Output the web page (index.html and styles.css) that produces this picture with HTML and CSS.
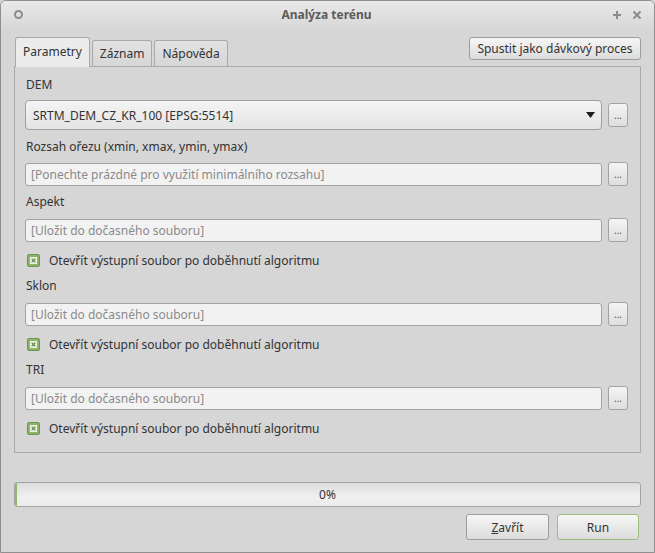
FILE: index.html
```html
<!DOCTYPE html>
<html lang="cs">
<head>
<meta charset="utf-8">
<title>Analýza terénu</title>
<link rel="stylesheet" href="styles.css">
</head>
<body>
<div class="window">
  <div class="titlebar">
    <span class="tb-icon"></span>
    <span class="title">Analýza terénu</span>
    <span class="tb-controls">
      <svg class="tb-btn" width="10" height="10" viewBox="0 0 10 10"><path d="M5 1v8M1 5h8" stroke="#8a8a8a" stroke-width="2"/></svg>
      <svg class="tb-btn" width="10" height="10" viewBox="0 0 10 10"><path d="M1.5 1.5l7 7M8.5 1.5l-7 7" stroke="#8a8a8a" stroke-width="2"/></svg>
    </span>
  </div>
  <div class="content">
    <div class="tabbar">
      <div class="tabs">
        <div class="tab active">Parametry</div>
        <div class="tab">Záznam</div>
        <div class="tab">Nápověda</div>
      </div>
      <button class="btn batch">Spustit jako dávkový proces</button>
    </div>
    <div class="panel">
      <div class="label first">DEM</div>
      <div class="row combo-row">
        <div class="combo">
          <span>SRTM_DEM_CZ_KR_100 [EPSG:5514]</span>
          <svg width="9" height="6" viewBox="0 0 9 6"><path d="M0 0h9L4.5 6z" fill="#1e1e1e"/></svg>
        </div>
        <button class="dots">...</button>
      </div>

      <div class="label after-combo">Rozsah ořezu (xmin, xmax, ymin, ymax)</div>
      <div class="row">
        <div class="input">[Ponechte prázdné pro využití minimálního rozsahu]</div>
        <button class="dots">...</button>
      </div>

      <div class="label">Aspekt</div>
      <div class="row">
        <div class="input">[Uložit do dočasného souboru]</div>
        <button class="dots">...</button>
      </div>
      <div class="check">
        <svg width="13" height="13" viewBox="0 0 13 13"><rect x="0.5" y="0.5" width="12" height="12" rx="1.5" fill="#8db56a" stroke="#6f9450"/><rect x="3" y="3" width="7" height="7" fill="#eef3e8"/><path d="M4.6 4.6l3.8 3.8M8.4 4.6l-3.8 3.8" stroke="#5f8440" stroke-width="1.3"/></svg>
        <span>Otevřít výstupní soubor po doběhnutí algoritmu</span>
      </div>

      <div class="label">Sklon</div>
      <div class="row">
        <div class="input">[Uložit do dočasného souboru]</div>
        <button class="dots">...</button>
      </div>
      <div class="check">
        <svg width="13" height="13" viewBox="0 0 13 13"><rect x="0.5" y="0.5" width="12" height="12" rx="1.5" fill="#8db56a" stroke="#6f9450"/><rect x="3" y="3" width="7" height="7" fill="#eef3e8"/><path d="M4.6 4.6l3.8 3.8M8.4 4.6l-3.8 3.8" stroke="#5f8440" stroke-width="1.3"/></svg>
        <span>Otevřít výstupní soubor po doběhnutí algoritmu</span>
      </div>

      <div class="label">TRI</div>
      <div class="row">
        <div class="input">[Uložit do dočasného souboru]</div>
        <button class="dots">...</button>
      </div>
      <div class="check">
        <svg width="13" height="13" viewBox="0 0 13 13"><rect x="0.5" y="0.5" width="12" height="12" rx="1.5" fill="#8db56a" stroke="#6f9450"/><rect x="3" y="3" width="7" height="7" fill="#eef3e8"/><path d="M4.6 4.6l3.8 3.8M8.4 4.6l-3.8 3.8" stroke="#5f8440" stroke-width="1.3"/></svg>
        <span>Otevřít výstupní soubor po doběhnutí algoritmu</span>
      </div>
    </div>

    <div class="progress">
      <div class="progress-fill" style="width:2px"></div>
      <span class="progress-text">0%</span>
    </div>

    <div class="actions">
      <button class="btn action"><u>Z</u>avřít</button>
      <button class="btn action run">Run</button>
    </div>
  </div>
</div>
</body>
</html>
```
FILE: styles.css
```css
* { box-sizing: border-box; }
html, body { margin: 0; padding: 0; }
body {
  width: 655px;
  height: 553px;
  font-family: "Noto Sans", "Open Sans", sans-serif;
  font-size: 12px;
  color: #333333;
  background: #d6d6d6;
}
.window {
  width: 655px;
  height: 553px;
  border: 1px solid #8f8f8f;
  border-radius: 6px 6px 0 0;
  background: #d6d6d6;
  display: flex;
  flex-direction: column;
  overflow: hidden;
}
.titlebar {
  height: 27px;
  flex: none;
  display: flex;
  align-items: center;
  padding: 0 12px 0 13px;
  background: linear-gradient(#e9e9e9, #d8d8d8);
}
.tb-icon {
  width: 9px;
  height: 9px;
  border: 2px solid #8a8a8a;
  border-radius: 50%;
}
.title {
  flex: 1;
  text-align: center;
  font-weight: bold;
  font-size: 12px;
  color: #5c5c5c;
  padding-left: 18px;
}
.tb-controls {
  display: flex;
  gap: 10px;
  align-items: center;
}
.tb-btn { display: block; }
.content {
  flex: 1;
  display: flex;
  flex-direction: column;
  padding: 9px 13px 0 13px;
}
.tabbar {
  display: flex;
  align-items: flex-start;
  justify-content: space-between;
  height: 29px;
  padding: 0 0 0 1px;
}
.tabs {
  display: flex;
  align-items: flex-end;
  gap: 2px;
  height: 29px;
}
.tab {
  height: 26px;
  padding: 0 7px;
  display: flex;
  align-items: center;
  border: 1px solid #a9a9a9;
  border-bottom: none;
  border-radius: 3px 3px 0 0;
  background: linear-gradient(#e2e2e2, #d6d6d6);
  color: #333;
}
.tab.active {
  height: 30px;
  margin-bottom: -1px;
  background: #ececec;
  position: relative;
  z-index: 1;
  padding: 0 7px 2px 7px;
}
.btn {
  font-family: inherit;
  font-size: 12px;
  color: #333;
  border: 1px solid #9c9c9c;
  border-radius: 3px;
  background: linear-gradient(#f6f6f6, #dcdcdc);
  padding: 0;
  margin: 0;
}
.batch {
  height: 23px;
  width: 172px;
}
.panel {
  height: 387px;
  border: 1px solid #aaaaaa;
  background: #d6d6d6;
  padding: 0 12px 0 10px;
  display: flex;
  flex-direction: column;
}
.label {
  height: 16px;
  line-height: 16px;
  margin-top: 8px;
  margin-bottom: 8px;
  padding-left: 1px;
}
.label.first { margin-top: 10px; margin-bottom: 7px; }
.label.after-combo { margin-top: 9px; margin-bottom: 7px; }
.row {
  display: flex;
  align-items: center;
  gap: 6px;
  height: 24px;
}
.combo-row { height: 30px; }
.combo {
  flex: 1;
  height: 30px;
  border: 1px solid #a0a0a0;
  border-radius: 4px;
  background: linear-gradient(#f4f4f4, #e4e4e4);
  display: flex;
  align-items: center;
  justify-content: space-between;
  padding: 0 6px 0 7px;
}
.input {
  flex: 1;
  height: 23px;
  border: 1px solid #a3a3a3;
  border-radius: 3px;
  background: #f2f2f2;
  color: #8a8a8a;
  display: flex;
  align-items: center;
  padding-left: 5px;
}
.dots {
  width: 20px;
  height: 24px;
  border: 1px solid #a3a3a3;
  border-radius: 3px;
  background: linear-gradient(#f4f4f4, #dedede);
  font-family: inherit;
  font-size: 10px;
  color: #445566;
  line-height: 1;
  display: flex;
  align-items: flex-end;
  justify-content: center;
  padding: 0 0 6px 0;
}
.check {
  display: flex;
  align-items: center;
  gap: 9px;
  height: 16px;
  margin-top: 10px;
  padding-left: 2px;
}
.check svg { display: block; }
.check + .label { margin-top: 10px; }
.progress {
  margin-top: 29px;
  height: 25px;
  width: 627px;
  border: 1px solid #a4a4a4;
  border-radius: 3px;
  background: linear-gradient(#dcdcdc, #f0f0f0 60%, #ececec);
  display: flex;
  align-items: center;
  justify-content: center;
  position: relative;
}
.progress-fill {
  position: absolute;
  left: 0;
  top: 0;
  bottom: 0;
  background: #8fbb69;
  border-radius: 2px 0 0 2px;
}
.progress-text { font-size: 12px; color: #333; }
.actions {
  display: flex;
  justify-content: flex-end;
  gap: 8px;
  margin-top: 7px;
  padding-right: 2px;
}
.action {
  width: 83px;
  height: 26px;
}
.run {
  width: 82px;
  border-color: #9cbc80;
}
```
